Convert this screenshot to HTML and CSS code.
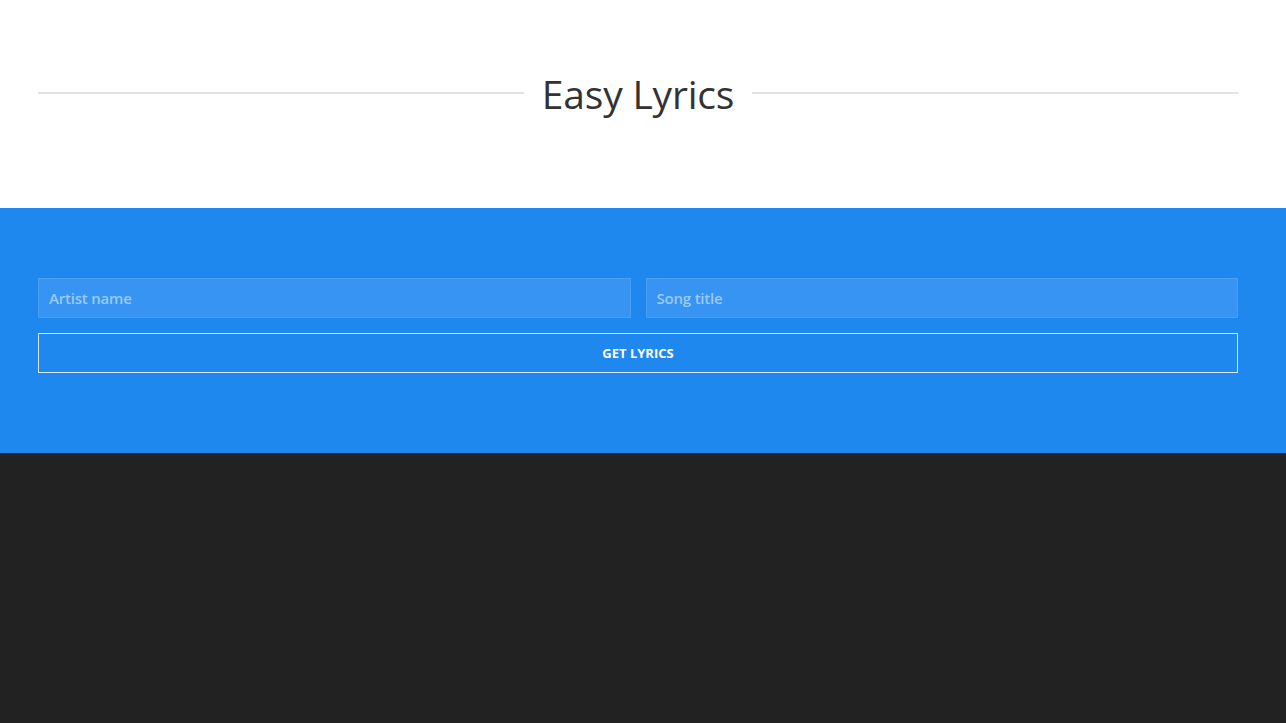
FILE: index.html
```html
<!DOCTYPE html>
<html>
<head>
<meta charset="utf-8">
<link rel="stylesheet" href="styles.css">
</head>
<body>
<header class="header">
  <div class="container title-row">
    <span class="rule"></span>
    <h1 class="title">Easy Lyrics</h1>
    <span class="rule"></span>
  </div>
</header>
<section class="search">
  <form class="container form">
    <div class="inputs">
      <input class="field" type="text" placeholder="Artist name">
      <input class="field" type="text" placeholder="Song title">
    </div>
    <button class="btn" type="button">GET LYRICS</button>
  </form>
</section>
<section class="results"></section>
</body>
</html>
```
FILE: styles.css
```css
* { box-sizing: border-box; }
html, body { margin: 0; padding: 0; }
body {
  font-family: "Open Sans", "Noto Sans", sans-serif;
  background: #222222;
  height: 723px;
  display: flex;
  flex-direction: column;
}
.container {
  width: 1200px;
  margin-left: 38px;
}
.header {
  background: #ffffff;
  height: 208px;
}
.title-row {
  display: flex;
  align-items: center;
  gap: 18px;
  height: 186px;
}
.rule {
  flex: 1;
  height: 2px;
  background: #e2e2e2;
}
.title {
  margin: 0;
  font-weight: 400;
  font-size: 39px;
  color: #333333;
  letter-spacing: -0.2px;
  line-height: 1;
}
.search {
  background: #1e88ee;
  height: 245px;
  padding-top: 70px;
}
.form { display: flex; flex-direction: column; gap: 15px; }
.inputs { display: flex; gap: 15px; }
.field {
  flex: 1;
  min-width: 0;
  height: 40px;
  background: #3794f2;
  border: 1px solid #4a9ef3;
  padding: 0 10px;
  font-family: inherit;
  font-size: 15px;
  font-weight: 600;
  letter-spacing: -0.2px;
  color: #ffffff;
  outline: none;
}
.field::placeholder { color: #9ccaf7; }
.btn {
  height: 40px;
  background: transparent;
  border: 1px solid #d6e9fb;
  color: #ffffff;
  font-family: inherit;
  font-weight: 700;
  font-size: 13px;
}
.results { flex: 1; background: #222222; }
```
